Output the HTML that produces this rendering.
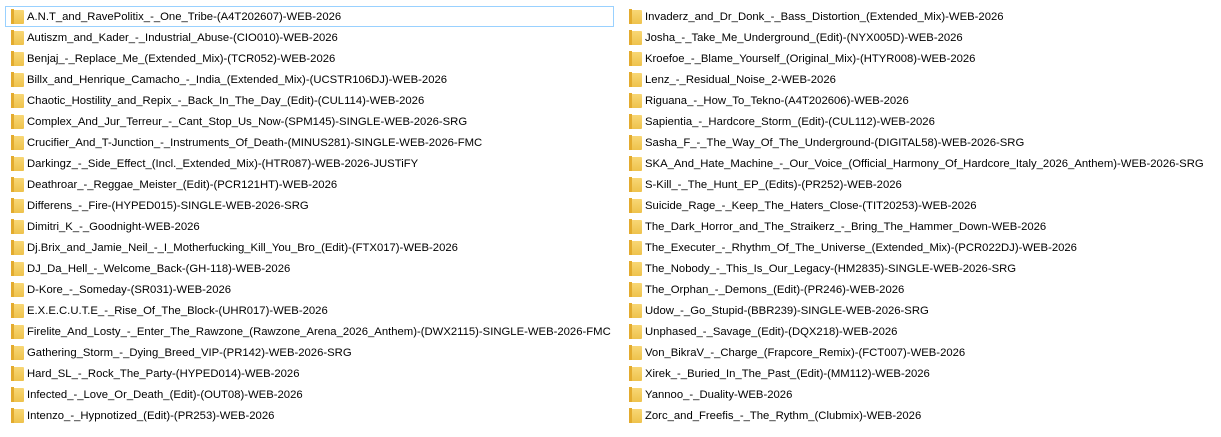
<!DOCTYPE html><html><head><style>
body{margin:0;width:1221px;height:437px;background:#fff;overflow:hidden;font-family:"Liberation Sans",sans-serif;font-size:11.3px;color:#000}
.col{position:absolute;top:6px}
.it{height:21px;position:relative;white-space:nowrap}
.it i{position:absolute;left:6px;top:4px;width:13px;height:14px;background:linear-gradient(#f8d775,#eec24c);border-radius:1px}
.it i:before{content:"";position:absolute;left:0;top:-1px;width:3px;height:15px;background:#e3ab2e}
.it span{position:absolute;left:22px;top:4px;line-height:14px}
.sel{outline:1px solid #99d1ff;outline-offset:-1px}
</style></head><body>
<div class="col" style="left:5px;width:609px">
<div class="it sel" style="height:21px;"><i></i><span>A.N.T_and_RavePolitix_-_One_Tribe-(A4T202607)-WEB-2026</span></div>
<div class="it"><i></i><span>Autiszm_and_Kader_-_Industrial_Abuse-(CIO010)-WEB-2026</span></div>
<div class="it"><i></i><span>Benjaj_-_Replace_Me_(Extended_Mix)-(TCR052)-WEB-2026</span></div>
<div class="it"><i></i><span>Billx_and_Henrique_Camacho_-_India_(Extended_Mix)-(UCSTR106DJ)-WEB-2026</span></div>
<div class="it"><i></i><span>Chaotic_Hostility_and_Repix_-_Back_In_The_Day_(Edit)-(CUL114)-WEB-2026</span></div>
<div class="it"><i></i><span>Complex_And_Jur_Terreur_-_Cant_Stop_Us_Now-(SPM145)-SINGLE-WEB-2026-SRG</span></div>
<div class="it"><i></i><span>Crucifier_And_T-Junction_-_Instruments_Of_Death-(MINUS281)-SINGLE-WEB-2026-FMC</span></div>
<div class="it"><i></i><span>Darkingz_-_Side_Effect_(Incl._Extended_Mix)-(HTR087)-WEB-2026-JUSTiFY</span></div>
<div class="it"><i></i><span>Deathroar_-_Reggae_Meister_(Edit)-(PCR121HT)-WEB-2026</span></div>
<div class="it"><i></i><span>Differens_-_Fire-(HYPED015)-SINGLE-WEB-2026-SRG</span></div>
<div class="it"><i></i><span>Dimitri_K_-_Goodnight-WEB-2026</span></div>
<div class="it"><i></i><span>Dj.Brix_and_Jamie_Neil_-_I_Motherfucking_Kill_You_Bro_(Edit)-(FTX017)-WEB-2026</span></div>
<div class="it"><i></i><span>DJ_Da_Hell_-_Welcome_Back-(GH-118)-WEB-2026</span></div>
<div class="it"><i></i><span>D-Kore_-_Someday-(SR031)-WEB-2026</span></div>
<div class="it"><i></i><span>E.X.E.C.U.T.E_-_Rise_Of_The_Block-(UHR017)-WEB-2026</span></div>
<div class="it"><i></i><span>Firelite_And_Losty_-_Enter_The_Rawzone_(Rawzone_Arena_2026_Anthem)-(DWX2115)-SINGLE-WEB-2026-FMC</span></div>
<div class="it"><i></i><span>Gathering_Storm_-_Dying_Breed_VIP-(PR142)-WEB-2026-SRG</span></div>
<div class="it"><i></i><span>Hard_SL_-_Rock_The_Party-(HYPED014)-WEB-2026</span></div>
<div class="it"><i></i><span>Infected_-_Love_Or_Death_(Edit)-(OUT08)-WEB-2026</span></div>
<div class="it"><i></i><span>Intenzo_-_Hypnotized_(Edit)-(PR253)-WEB-2026</span></div>
</div>
<div class="col" style="left:623px;width:598px">
<div class="it"><i></i><span>Invaderz_and_Dr_Donk_-_Bass_Distortion_(Extended_Mix)-WEB-2026</span></div>
<div class="it"><i></i><span>Josha_-_Take_Me_Underground_(Edit)-(NYX005D)-WEB-2026</span></div>
<div class="it"><i></i><span>Kroefoe_-_Blame_Yourself_(Original_Mix)-(HTYR008)-WEB-2026</span></div>
<div class="it"><i></i><span>Lenz_-_Residual_Noise_2-WEB-2026</span></div>
<div class="it"><i></i><span>Riguana_-_How_To_Tekno-(A4T202606)-WEB-2026</span></div>
<div class="it"><i></i><span>Sapientia_-_Hardcore_Storm_(Edit)-(CUL112)-WEB-2026</span></div>
<div class="it"><i></i><span>Sasha_F_-_The_Way_Of_The_Underground-(DIGITAL58)-WEB-2026-SRG</span></div>
<div class="it"><i></i><span>SKA_And_Hate_Machine_-_Our_Voice_(Official_Harmony_Of_Hardcore_Italy_2026_Anthem)-WEB-2026-SRG</span></div>
<div class="it"><i></i><span>S-Kill_-_The_Hunt_EP_(Edits)-(PR252)-WEB-2026</span></div>
<div class="it"><i></i><span>Suicide_Rage_-_Keep_The_Haters_Close-(TIT20253)-WEB-2026</span></div>
<div class="it"><i></i><span>The_Dark_Horror_and_The_Straikerz_-_Bring_The_Hammer_Down-WEB-2026</span></div>
<div class="it"><i></i><span>The_Executer_-_Rhythm_Of_The_Universe_(Extended_Mix)-(PCR022DJ)-WEB-2026</span></div>
<div class="it"><i></i><span>The_Nobody_-_This_Is_Our_Legacy-(HM2835)-SINGLE-WEB-2026-SRG</span></div>
<div class="it"><i></i><span>The_Orphan_-_Demons_(Edit)-(PR246)-WEB-2026</span></div>
<div class="it"><i></i><span>Udow_-_Go_Stupid-(BBR239)-SINGLE-WEB-2026-SRG</span></div>
<div class="it"><i></i><span>Unphased_-_Savage_(Edit)-(DQX218)-WEB-2026</span></div>
<div class="it"><i></i><span>Von_BikraV_-_Charge_(Frapcore_Remix)-(FCT007)-WEB-2026</span></div>
<div class="it"><i></i><span>Xirek_-_Buried_In_The_Past_(Edit)-(MM112)-WEB-2026</span></div>
<div class="it"><i></i><span>Yannoo_-_Duality-WEB-2026</span></div>
<div class="it"><i></i><span>Zorc_and_Freefis_-_The_Rythm_(Clubmix)-WEB-2026</span></div>
</div>
</body></html>
